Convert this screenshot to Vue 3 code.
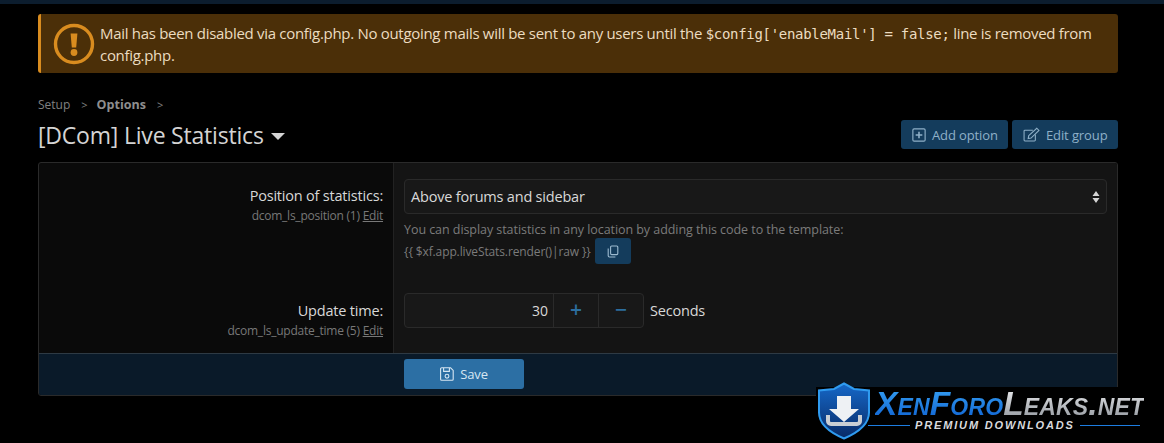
<script setup>
const options = [
  { label: 'Position of statistics:', id: 'dcom_ls_position', order: 1 },
  { label: 'Update time:', id: 'dcom_ls_update_time', order: 5 }
]
</script>

<template>
  <div class="page">
    <div class="topbar"></div>
    <main class="content">
      <div class="alert">
        <svg class="alert-icon" viewBox="0 0 42 42" width="42" height="42">
          <circle cx="21" cy="21" r="18.5" fill="none" stroke="#d98c1f" stroke-width="3.4" />
          <path d="M17.6 10.5h6.8l-1.2 14h-4.4z" fill="#d98c1f" />
          <circle cx="21" cy="29.5" r="3.4" fill="#d98c1f" />
        </svg>
        <p class="alert-text">
          Mail has been disabled via config.php. No outgoing mails will be sent to any users until the
          <code>$config['enableMail'] = false;</code> line is removed from config.php.
        </p>
      </div>

      <nav class="crumbs">
        <span>Setup</span><span class="sep">&gt;</span><b>Options</b><span class="sep">&gt;</span>
      </nav>

      <header class="head">
        <h1>[DCom] Live Statistics <i class="caret"></i></h1>
        <div class="head-actions">
          <button class="btn" type="button">
            <svg viewBox="0 0 16 16" width="14" height="14" fill="none" stroke="currentColor" stroke-width="1.3">
              <rect x="1" y="1" width="14" height="14" rx="1.4" />
              <path d="M8 4.2v7.6M4.2 8h7.6" stroke-width="1.8" />
            </svg>
            Add option
          </button>
          <button class="btn" type="button">
            <svg viewBox="0 0 19 16" width="17" height="15" fill="none" stroke="currentColor" stroke-width="1.2">
              <path d="M11 3.2H2.2a1 1 0 0 0-1 1v10a1 1 0 0 0 1 1h10.6a1 1 0 0 0 1-1V8" />
              <path d="M6.4 9.2 15.4 1l2.4 2.4-8.8 8.6-3.2.6z" />
            </svg>
            Edit group
          </button>
        </div>
      </header>

      <section class="card">
        <div class="rows">
          <div class="row first">
            <div class="label">
              <div class="name">{{ options[0].label }}</div>
              <div class="hint">{{ options[0].id }} ({{ options[0].order }}) <u>Edit</u></div>
            </div>
            <div class="field">
              <div class="select">
                <span>Above forums and sidebar</span>
                <svg viewBox="0 0 8 14" width="8" height="14" fill="#d4d4d4">
                  <path d="M4 1 7.5 6h-7zM4 13 .5 8h7z" />
                </svg>
              </div>
              <p class="explain">You can display statistics in any location by adding this code to the template:</p>
              <div class="code-line">
                <span>&#123;&#123; $xf.app.liveStats.render()|raw &#125;&#125;</span>
                <button class="copy" type="button" aria-label="Copy">
                  <svg viewBox="0 0 12 13" width="12" height="13" fill="none" stroke="currentColor" stroke-width="1.1">
                    <rect x="3.6" y="1" width="7.2" height="8.6" rx="1" />
                    <path d="M1.2 3.4v7.4a1.2 1.2 0 0 0 1.2 1.2h6" />
                  </svg>
                </button>
              </div>
            </div>
          </div>
          <div class="row second">
            <div class="label">
              <div class="name">{{ options[1].label }}</div>
              <div class="hint">{{ options[1].id }} ({{ options[1].order }}) <u>Edit</u></div>
            </div>
            <div class="field inline">
              <div class="spinner">
                <span class="value">30</span>
                <span class="step">+</span>
                <span class="step">&minus;</span>
              </div>
              <span class="units">Seconds</span>
            </div>
          </div>
        </div>
        <footer class="submit">
          <button class="save" type="button">
            <svg viewBox="0 0 14 14" width="14" height="14" fill="none" stroke="currentColor" stroke-width="1.1">
              <path d="M1.6.8h9l2.6 2.6v8.8a1 1 0 0 1-1 1H1.6a1 1 0 0 1-1-1V1.8a1 1 0 0 1 1-1z" />
              <path d="M3.6 1v3.4h5.8V1" />
              <circle cx="7" cy="9.2" r="1.9" />
            </svg>
            Save
          </button>
        </footer>
      </section>
    </main>

    <div class="logo">
      <svg class="shield" viewBox="0 0 54 58" width="54" height="58">
        <defs>
          <linearGradient id="shieldFill" x1="0" y1="0" x2="0" y2="1">
            <stop offset="0" stop-color="#1668c8" />
            <stop offset="1" stop-color="#082a66" />
          </linearGradient>
        </defs>
        <path d="M27 1.5 37 7l15 1.5v22C52 43 40 51 27 56.5 14 51 2 43 2 30.5v-22L17 7z" fill="url(#shieldFill)" stroke="#2f9bf0" stroke-width="2" />
        <path d="M20 14h14v13h8L27 40 12 27h8z" fill="#eef1f4" />
        <path d="M11 33v6a3 3 0 0 0 3 3h26a3 3 0 0 0 3-3v-6" fill="none" stroke="#c9ced4" stroke-width="4" />
      </svg>
      <div class="logo-text">
        <div class="wordmark"><span class="blue">XenForo</span><span class="silver">Leaks.net</span></div>
        <div class="tagline"><i></i><span>PREMIUM DOWNLOADS</span><i class="long"></i></div>
      </div>
    </div>
  </div>
</template>

<style>
html, body { background: #000; }
</style>

<style scoped>
.page {
  position: relative;
  width: 1164px;
  height: 443px;
  overflow: hidden;
  background: #000;
  color: #d8d8d8;
  font-family: "Open Sans", "Noto Sans", sans-serif;
  font-size: 13px;
}
.topbar { height: 4px; background: #0c1d2e; }
.content { padding: 10px 46px 0 38px; }

.alert {
  display: flex;
  align-items: flex-start;
  height: 59px;
  box-sizing: border-box;
  padding: 8px 10px 0 12px;
  background: #4b2f08;
  border-left: 3px solid #d98c1f;
  border-radius: 3px;
}
.alert-icon { flex: none; margin: 1px 5px 0 0; }
.alert-text {
  margin: 0;
  font-size: 15px;
  line-height: 22px;
  color: #ecdcc0;
  letter-spacing: -0.3px;
}
.alert-text code {
  font-family: "DejaVu Sans Mono", monospace;
  font-size: 14px;
  line-height: 0;
  letter-spacing: -0.3px;
}

.crumbs {
  display: flex;
  align-items: center;
  margin-top: 22px;
  height: 18px;
  font-size: 12px;
  color: #808080;
}
.crumbs b { color: #8e8e8e; font-size: 12.5px; }
.crumbs .sep { margin: 0 9px 0 11px; font-size: 11px; }

.head {
  display: flex;
  justify-content: space-between;
  align-items: flex-start;
  margin-top: 3px;
  height: 38px;
}
h1 {
  margin: 0;
  font-size: 23px;
  font-weight: 400;
  line-height: 38px;
  color: #d4d4d4;
  letter-spacing: -0.2px;
}
.caret {
  display: inline-block;
  margin-left: 2px;
  vertical-align: 4px;
  border: 7px solid transparent;
  border-top-color: #d4d4d4;
  border-bottom: 0;
}
.head-actions { display: flex; gap: 4px; margin-top: 4px; }
.btn {
  display: flex;
  align-items: center;
  gap: 6px;
  height: 29px;
  padding: 0 10.5px;
  border: 0;
  border-radius: 3px;
  background: #143c5c;
  color: #8fb0c8;
  font: inherit;
  letter-spacing: -0.1px;
}

.card {
  margin-top: 8px;
  width: 1080px;
  height: 234px;
  box-sizing: border-box;
  display: flex;
  flex-direction: column;
  border: 1px solid #2a2a2a;
  border-radius: 3px;
  background: #0a0a0a;
  overflow: hidden;
}
.rows { flex: 1; min-height: 0; }
.row { display: grid; grid-template-columns: 354px 1fr; }
.first { height: 119px; }
.second { height: 71px; }
.label {
  padding: 23px 10px 0 0;
  text-align: right;
}
.name { font-size: 14.5px; line-height: 20px; color: #d8d8d8; letter-spacing: -0.2px; }
.hint { margin-top: 1px; font-size: 12px; line-height: 18px; color: #787878; letter-spacing: -0.24px; }
.field {
  padding: 16px 10px 0 10px;
  background: #141414;
  border-left: 1px solid #222;
}
.second .label { padding-top: 19px; }
.inline { display: flex; align-items: flex-start; gap: 6px; padding-top: 11px; }
.select {
  display: flex;
  align-items: center;
  justify-content: space-between;
  height: 35px;
  box-sizing: border-box;
  padding: 0 6px;
  border: 1px solid #2a2a2a;
  border-radius: 4px;
  background: #181818;
  font-size: 14.5px;
  color: #d8d8d8;
  letter-spacing: -0.2px;
}
.explain {
  margin: 7px 0 0;
  font-size: 12.5px;
  line-height: 17px;
  color: #7b7b7b;
  letter-spacing: -0.06px;
}
.code-line {
  display: flex;
  align-items: center;
  gap: 4px;
  font-size: 12px;
  color: #7b7b7b;
  letter-spacing: -0.12px;
}
.copy {
  display: flex;
  align-items: center;
  justify-content: center;
  width: 36px;
  height: 26px;
  padding: 0;
  border: 0;
  border-radius: 3px;
  background: #143c5c;
  color: #9dbbd0;
}
.spinner {
  display: flex;
  width: 240px;
  height: 35px;
  box-sizing: border-box;
  border: 1px solid #2a2a2a;
  border-radius: 4px;
  background: #181818;
}
.value {
  flex: 1;
  padding-right: 5px;
  text-align: right;
  font-size: 14px;
  line-height: 33px;
  color: #d8d8d8;
}
.step {
  width: 44px;
  border-left: 1px solid #2a2a2a;
  text-align: center;
  font-size: 21px;
  font-weight: 600;
  line-height: 31px;
  color: #2c6e9f;
}
.units { font-size: 14.5px; line-height: 35px; color: #d8d8d8; letter-spacing: -0.2px; }

.submit {
  display: flex;
  height: 42px;
  box-sizing: border-box;
  padding: 5px 0 0 365px;
  border-top: 1px solid #2e3a44;
  background: #0a1a29;
}
.save {
  display: flex;
  align-items: center;
  justify-content: center;
  gap: 6px;
  width: 120px;
  height: 30px;
  border: 0;
  border-radius: 3px;
  background: #2c6fa4;
  color: #d6e6f2;
  font: inherit;
  letter-spacing: -0.1px;
}

.logo {
  position: absolute;
  left: 816px;
  top: 387px;
  display: flex;
  align-items: flex-start;
  width: 348px;
  height: 56px;
  background: #000;
}
.shield { flex: none; margin: -5px 0 0 1px; }
.logo-text { margin: 2px 0 0 4px; }
.wordmark {
  font-family: "Liberation Sans", sans-serif;
  font-size: 33.5px;
  line-height: 29px;
  font-weight: 700;
  font-style: italic;
  font-variant: small-caps;
  white-space: nowrap;
  letter-spacing: 0.15px;
}
.blue {
  background: linear-gradient(#38a4f5, #0d5fd0);
  -webkit-background-clip: text;
  background-clip: text;
  color: transparent;
}
.silver {
  background: linear-gradient(#f2f3f5, #8d9299);
  -webkit-background-clip: text;
  background-clip: text;
  color: transparent;
}
.tagline {
  display: flex;
  align-items: center;
  gap: 5px;
  margin: 0 0 0 -7px;
  font-family: "Liberation Sans", sans-serif;
  font-size: 11px;
  line-height: 14px;
  font-weight: 700;
  font-style: italic;
  letter-spacing: 1.85px;
  color: #d8dade;
  white-space: nowrap;
}
.tagline i { width: 42px; height: 1px; background: #1d7de0; }
.tagline i.long { width: 60px; }
</style>
